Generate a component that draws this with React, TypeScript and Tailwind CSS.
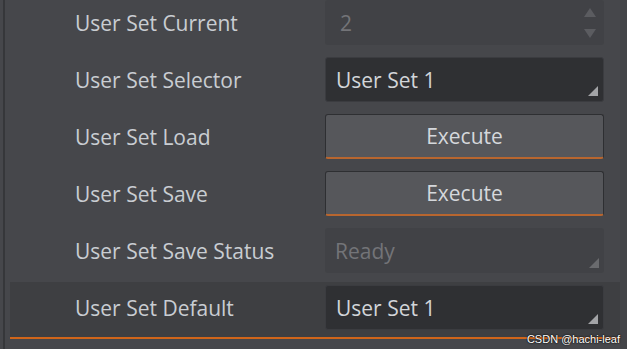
import { ReactNode } from 'react'

type Kind = 'spin' | 'combo' | 'button' | 'status'

interface Row {
  label: string
  kind: Kind
  value: string
  selected?: boolean
}

const rows: Row[] = [
  { label: 'User Set Current', kind: 'spin', value: '2' },
  { label: 'User Set Selector', kind: 'combo', value: 'User Set 1' },
  { label: 'User Set Load', kind: 'button', value: 'Execute' },
  { label: 'User Set Save', kind: 'button', value: 'Execute' },
  { label: 'User Set Save Status', kind: 'status', value: 'Ready' },
  { label: 'User Set Default', kind: 'combo', value: 'User Set 1', selected: true },
]

function Corner({ dim }: { dim?: boolean }) {
  return (
    <svg width="10" height="10" viewBox="0 0 10 10" className="absolute right-[5px] bottom-[5px]">
      <polygon points="10,0 10,10 0,10" fill={dim ? '#6a6b6e' : '#a3a4a7'} />
    </svg>
  )
}

function Field({ row }: { row: Row }) {
  if (row.kind === 'button') {
    return (
      <div className="h-[45px] w-[279px] pt-[2px] rounded-[3px] border border-[#2e2f32] border-b-2 border-b-[#b8662f] bg-[#56575b] flex items-center justify-center text-[#d5d8dc]">
        {row.value}
      </div>
    )
  }
  if (row.kind === 'spin') {
    return (
      <div className="relative h-[45px] w-[279px] pt-[2px] rounded-[3px] bg-[#414246] flex items-center pl-[15px] text-[#737478]">
        {row.value}
        <svg width="14" height="32" viewBox="0 0 14 32" className="absolute right-[7px] top-[7px]">
          <polygon points="7,1 13,10 1,10" fill="#5b5c60" />
          <polygon points="1,22 13,22 7,31" fill="#5b5c60" />
        </svg>
      </div>
    )
  }
  const dim = row.kind === 'status'
  return (
    <div
      className={
        dim
          ? 'relative h-[45px] w-[279px] pt-[2px] rounded-[3px] bg-[#414246] flex items-center pl-[10px] text-[#737478]'
          : 'relative h-[45px] w-[279px] pt-[2px] rounded-[3px] border border-[#3b3c40] bg-[#2f3033] flex items-center pl-[10px] text-[#d2d5d9]'
      }
    >
      {row.value}
      <Corner dim={dim} />
    </div>
  )
}

function Line({ row, children }: { row: Row; children?: ReactNode }) {
  return (
    <div
      className={
        row.selected
          ? 'ml-[5px] h-[57px] pt-[3px] bg-[#3e3f42] border-b-2 border-[#d0651a] flex items-start'
          : 'ml-[5px] h-[57px] pt-[3px] flex items-start'
      }
    >
      <div className="h-[45px] w-[315px] pl-[65px] pt-[2px] flex items-center text-[#c9cdd2]">{row.label}</div>
      {children}
    </div>
  )
}

export default function App() {
  return (
    <div
      className="relative w-[627px] h-[349px] overflow-hidden bg-[#46474b] text-[21px] flex"
      style={{ fontFamily: '"Open Sans", "Noto Sans", sans-serif' }}
    >
      <div className="w-[3px] shrink-0" />
      <div className="w-[2px] shrink-0 bg-[#36373a]" />
      <div className="flex-1 -mt-[3px] flex flex-col">
        {rows.map((r) => (
          <Line key={r.label} row={r}>
            <Field row={r} />
          </Line>
        ))}
      </div>
      <div className="w-[7px] shrink-0 bg-[#434448]" />
      <div
        className="absolute right-[7px] bottom-[4px] text-[11px] leading-none text-white"
        style={{ fontFamily: '"Liberation Sans", sans-serif', textShadow: '0 0 2px #000, 0 0 1px #000' }}
      >
        CSDN @hachi-leaf
      </div>
    </div>
  )
}
